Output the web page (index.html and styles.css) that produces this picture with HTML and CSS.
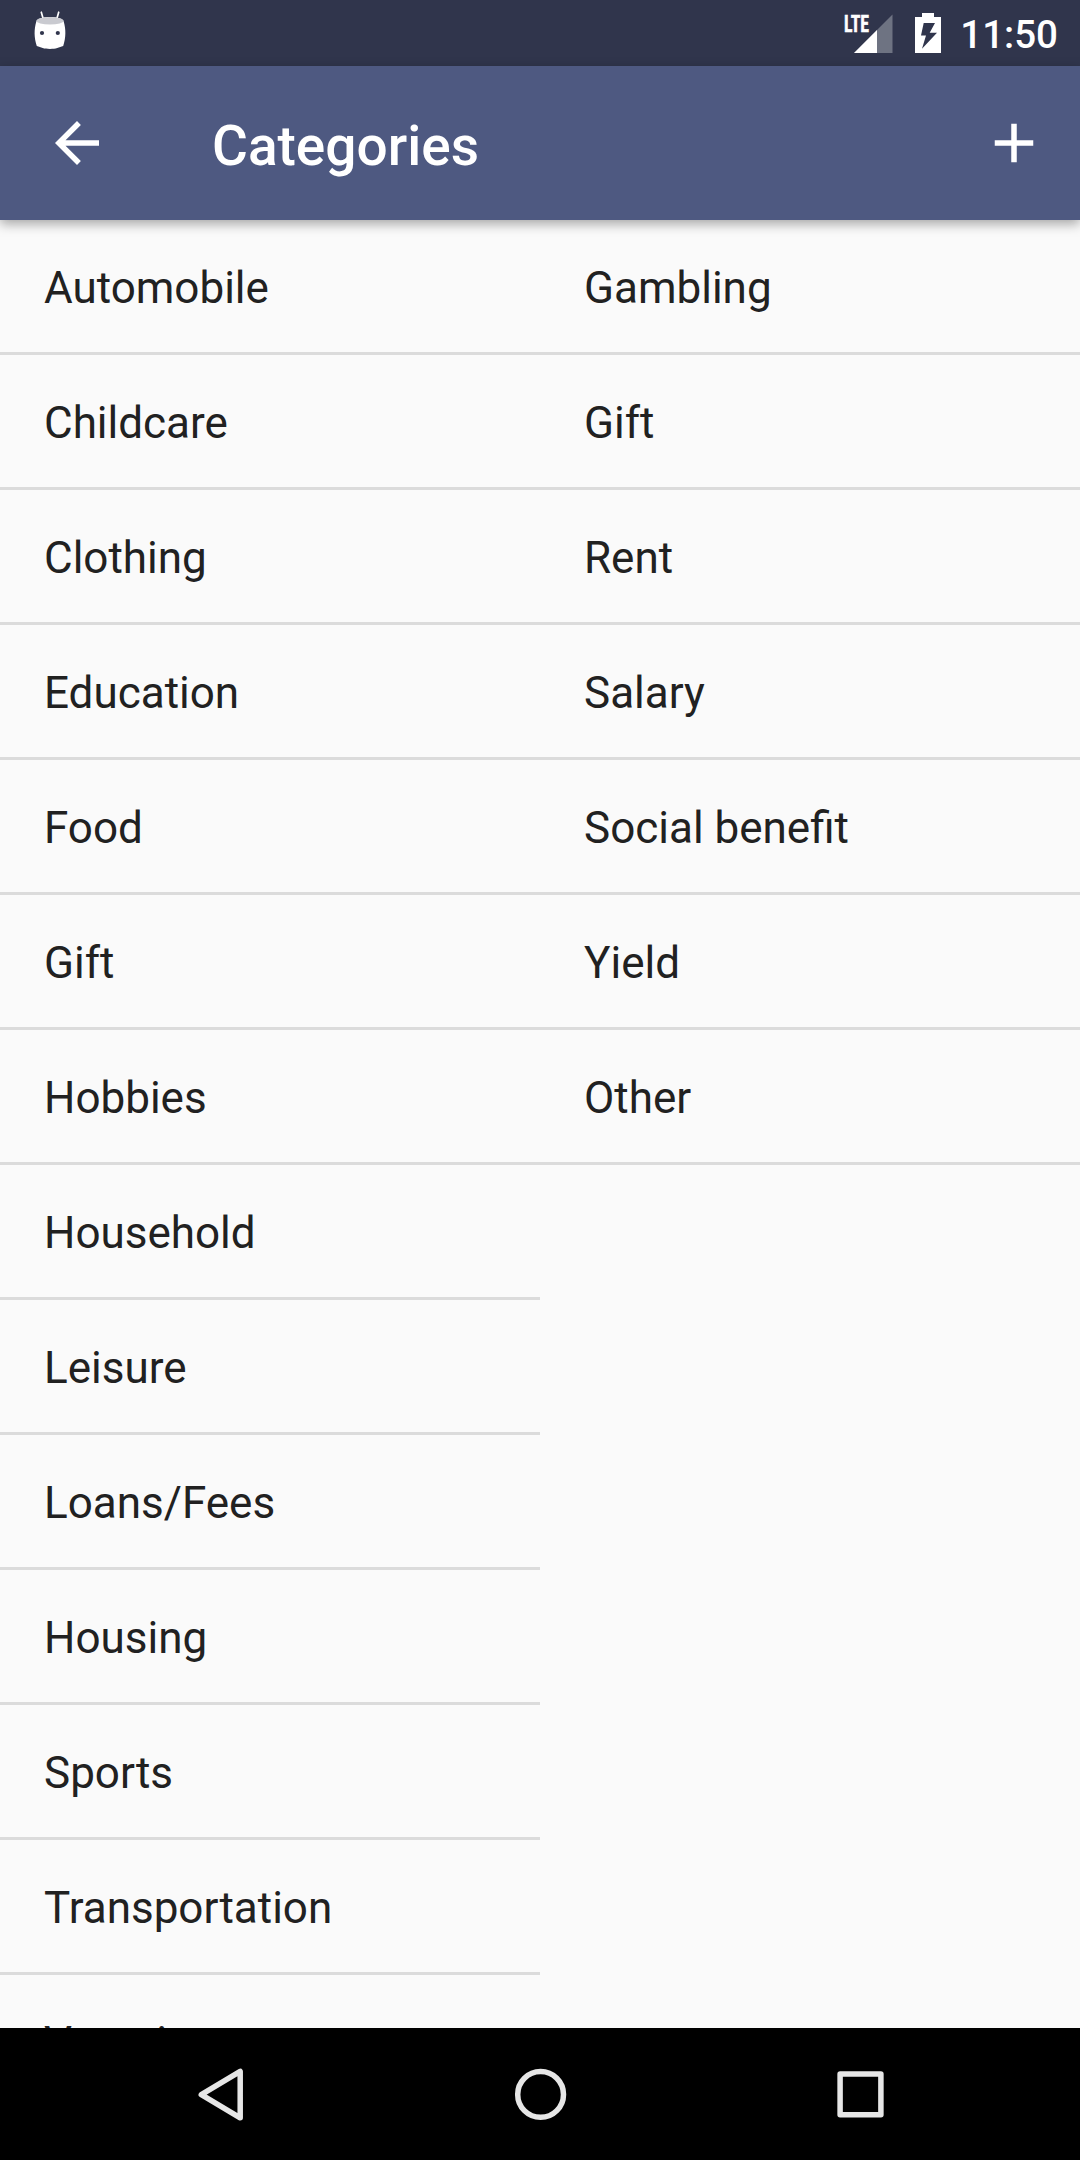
FILE: index.html
```html
<!DOCTYPE html>
<html lang="en">
<head>
<meta charset="utf-8">
<title>Categories</title>
<link rel="stylesheet" href="styles.css">
</head>
<body>
<div class="screen">
  <div class="status-bar">
    <svg class="android-icon" width="32" height="39" viewBox="0 0 32 39">
      <path d="M7.300 1.200l2 7M24.700 1.200l-2 7" stroke="#fff" stroke-width="1.700" stroke-linecap="round" fill="none"/>
      <path d="M2.300 10.500C0 18.500 0 26.500 2.800 35C7 36.500 10 37.900 16 37.900S25 36.500 29.200 35C32 26.500 32 18.500 29.700 10.500C28 7 22 6 16 6S4 7 2.300 10.500z" fill="#fff"/>
      <ellipse cx="16" cy="9.800" rx="13.700" ry="3.700" fill="#c9cad0"/>
      <circle cx="8" cy="22" r="2.100" fill="#30354c"/>
      <circle cx="23.800" cy="22" r="2.100" fill="#30354c"/>
    </svg>
    <div class="status-icons">
      <svg class="signal-icon" width="50" height="40" viewBox="0 0 50 40">
        <path d="M48.500 0.500V39H10z" fill="#6e7382"/>
        <path d="M33 16V39H10z" fill="#fff"/>
        <text class="network-type" x="0" y="17.500" textLength="25" lengthAdjust="spacingAndGlyphs">LTE</text>
      </svg>
      <svg class="battery-icon" width="26" height="40" viewBox="0 0 26 40">
        <path d="M7 0H19V4H26V40H0V4H7z" fill="#fff"/>
        <path d="M8.700 10H20L14.700 19.700H22L7 35.800L11 22.500H6z" fill="#30354c"/>
      </svg>
      <span class="clock">11:50</span>
    </div>
  </div>
  <header class="app-bar">
    <svg width="66" height="66" viewBox="0 0 24 24"><path d="M20 11H7.830l5.590-5.590L12 4l-8 8 8 8 1.410-1.410L7.830 13H20v-2z" fill="#fff"/></svg>
    <h1 class="title">Categories</h1>
    <svg width="66" height="66" viewBox="0 0 24 24"><path d="M19 13h-6v6h-2v-6H5v-2h6V5h2v6h6v2z" fill="#fff"/></svg>
  </header>
  <main class="lists">
    <ul class="list">
      <li>Automobile</li>
      <li>Childcare</li>
      <li>Clothing</li>
      <li>Education</li>
      <li>Food</li>
      <li>Gift</li>
      <li>Hobbies</li>
      <li>Household</li>
      <li>Leisure</li>
      <li>Loans/Fees</li>
      <li>Housing</li>
      <li>Sports</li>
      <li>Transportation</li>
      <li>Vacation</li>
    </ul>
    <ul class="list">
      <li>Gambling</li>
      <li>Gift</li>
      <li>Rent</li>
      <li>Salary</li>
      <li>Social benefit</li>
      <li>Yield</li>
      <li>Other</li>
    </ul>
  </main>
  <nav class="nav-bar">
    <svg width="60" height="60" viewBox="0 0 60 60"><path d="M50.200 7.400V53.800L11.300 30.600z" class="nav-shape"/></svg>
    <svg width="60" height="60" viewBox="0 0 60 60"><circle cx="30.600" cy="30.400" r="22.900" class="nav-shape"/></svg>
    <svg width="60" height="60" viewBox="0 0 60 60"><rect x="10.100" y="9.900" width="40.800" height="40.800" class="nav-shape"/></svg>
  </nav>
</div>
</body>
</html>
```
FILE: styles.css
```css
* { box-sizing: border-box; }

body {
  margin: 0;
  font-family: Roboto, sans-serif;
  background: #fafafa;
}

svg { display: block; flex: none; }

.screen {
  width: 1080px;
  height: 2160px;
  display: flex;
  flex-direction: column;
  overflow: hidden;
}

.status-bar {
  height: 66px;
  flex: none;
  display: flex;
  justify-content: space-between;
  align-items: flex-start;
  padding: 11px 22px 0 34px;
  background: #30354c;
}

.status-icons { display: flex; align-items: flex-start; }

.signal-icon { margin: 2.500px 21px 0 0; overflow: visible; }

.battery-icon { margin: 2px 19px 0 0; }

.network-type {
  font-family: "Roboto Condensed", Roboto, sans-serif;
  font-size: 23px;
  font-weight: 700;
  fill: #fff;
  stroke: #fff;
  stroke-width: 0.500;
}

.clock {
  margin-top: 1px;
  font-size: 38.500px;
  line-height: 46px;
  font-weight: 500;
  color: #fff;
}

.app-bar {
  height: 154px;
  flex: none;
  display: flex;
  align-items: center;
  padding: 0 33px 0 44px;
  background: #4e5981;
  box-shadow: 0 4px 11px rgba(0, 0, 0, 0.34);
  position: relative;
}

.title {
  flex: 1;
  margin: 6px 0 0 102px;
  font-size: 55px;
  line-height: 64px;
  font-weight: 500;
  color: #fff;
}

.lists {
  flex: 1;
  min-height: 0;
  overflow: hidden;
  display: grid;
  grid-template-columns: 1fr 1fr;
  align-items: start;
}

.list { margin: 0; padding: 0; list-style: none; }

.list li {
  height: 135px;
  padding: 5px 44px 0;
  border-bottom: 3px solid #dbdbdb;
  font-size: 44px;
  line-height: 126px;
  color: #212121;
}

.nav-bar {
  height: 132px;
  flex: none;
  display: flex;
  align-items: center;
  justify-content: center;
  gap: 260px;
  background: #000;
}

.nav-shape {
  fill: none;
  stroke: #e6e6e6;
  stroke-width: 5.500;
  stroke-linejoin: round;
}
```
